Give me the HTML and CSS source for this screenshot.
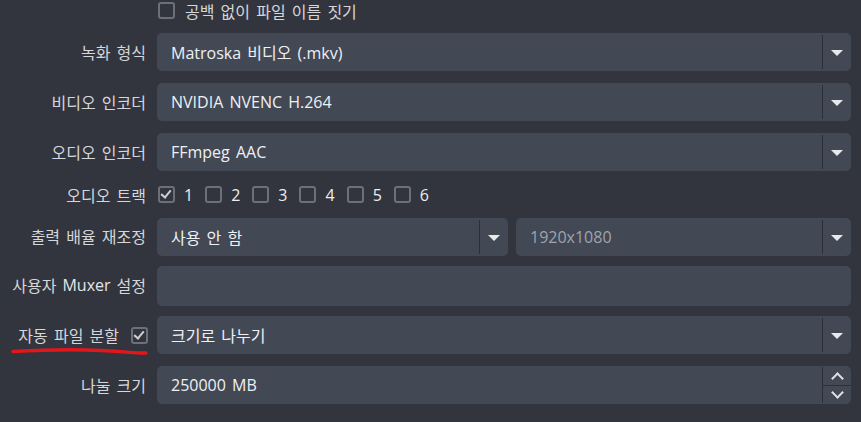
FILE: index.html
```html
<!DOCTYPE html>
<html lang="ko">
<head>
    <meta charset="UTF-8">
    <title>녹화 설정</title>
    <link rel="stylesheet" href="styles.css">
</head>
<body>
    <div class="form">
        <!-- top checkbox row -->
        <div class="label"></div>
        <label class="check-line">
            <span class="box"></span>
            <span>공백 없이 파일 이름 짓기</span>
        </label>

        <div class="label">녹화 형식</div>
        <div class="combo">
            <span class="combo-text">Matroska 비디오 (.mkv)</span>
            <span class="combo-arrow"><i class="tri"></i></span>
        </div>

        <div class="label">비디오 인코더</div>
        <div class="combo">
            <span class="combo-text">NVIDIA NVENC H.264</span>
            <span class="combo-arrow"><i class="tri"></i></span>
        </div>

        <div class="label">오디오 인코더</div>
        <div class="combo">
            <span class="combo-text">FFmpeg AAC</span>
            <span class="combo-arrow"><i class="tri"></i></span>
        </div>

        <div class="label">오디오 트랙</div>
        <div class="tracks">
            <label class="track"><span class="box checked"></span>1</label>
            <label class="track"><span class="box"></span>2</label>
            <label class="track"><span class="box"></span>3</label>
            <label class="track"><span class="box"></span>4</label>
            <label class="track"><span class="box"></span>5</label>
            <label class="track"><span class="box"></span>6</label>
        </div>

        <div class="label">출력 배율 재조정</div>
        <div class="split">
            <div class="combo">
                <span class="combo-text">사용 안 함</span>
                <span class="combo-arrow"><i class="tri"></i></span>
            </div>
            <div class="combo disabled">
                <span class="combo-text">1920x1080</span>
                <span class="combo-arrow"><i class="tri"></i></span>
            </div>
        </div>

        <div class="label">사용자<span class="latin">Muxer</span>설정</div>
        <div class="text-input"></div>

        <div class="label label-check">
            <span>자동 파일 분할</span>
            <span class="box checked"></span>
            <svg class="scribble" width="140" height="12" viewBox="0 0 140 12">
                <path d="M2 6.5 C 30 5, 60 4, 90 5.5 S 125 8.5, 135 8" />
            </svg>
        </div>
        <div class="combo">
            <span class="combo-text">크기로 나누기</span>
            <span class="combo-arrow"><i class="tri"></i></span>
        </div>

        <div class="label">나눌 크기</div>
        <div class="combo spin">
            <span class="combo-text">250000 MB</span>
            <span class="spin-buttons">
                <span class="spin-btn"><i class="chev up"></i></span>
                <span class="spin-btn"><i class="chev down"></i></span>
            </span>
        </div>
    </div>
</body>
</html>
```

FILE: styles.css
```css
body {
    margin: 0;
    background-color: #32353e;
    color: #d6d7da;
    font-family: "Open Sans", "Noto Sans CJK KR", sans-serif;
    font-size: 16px;
    word-spacing: 2px;
    height: 422px;
    overflow: hidden;
}

.form {
    display: grid;
    grid-template-columns: 148px 1fr;
    grid-template-rows: 21px 38px 38px 38px 23px 36px 38px 38px 37px;
    column-gap: 9px;
    row-gap: 12px;
    padding-right: 10px;
}

.label {
    display: flex;
    justify-content: flex-end;
    align-items: center;
    white-space: nowrap;
    padding-right: 2px;
}

.latin {
    color: #e4e6ea;
    margin: 0 6px;
}

.label-check {
    position: relative;
    gap: 12px;
    padding-right: 0;
}

.scribble {
    position: absolute;
    left: 11px;
    top: 29px;
}

.scribble path {
    fill: none;
    stroke: #e3161b;
    stroke-width: 3.4;
    stroke-linecap: round;
}

/* checkboxes */
.box {
    display: inline-block;
    box-sizing: border-box;
    width: 17px;
    height: 17px;
    border: 2px solid #6c707b;
    border-radius: 3px;
    position: relative;
    flex: none;
}

.box.checked::after {
    content: "";
    position: absolute;
    left: 3px;
    top: 0px;
    width: 4px;
    height: 8px;
    border: solid #cfd0d4;
    border-width: 0 2px 2px 0;
    transform: rotate(40deg);
}

.check-line {
    display: flex;
    align-items: center;
    gap: 10px;
    padding-left: 1px;
}

.tracks {
    display: flex;
    align-items: center;
    gap: 12px;
    padding-left: 1px;
    color: #eceef1;
}

.track {
    display: flex;
    align-items: center;
    gap: 9px;
}

/* combo boxes */
.combo,
.text-input {
    display: flex;
    align-items: center;
    background-color: #434855;
    border-radius: 5px;
    color: #eef0f3;
    height: 38px;
    align-self: start;
}

.text-input {
    height: 40px;
}

.combo-text {
    flex: 1;
    padding-left: 14px;
    white-space: nowrap;
}

.combo-arrow,
.spin-buttons {
    width: 28px;
    align-self: stretch;
    border-left: 1px solid #2c2f37;
    margin: 2px 0;
    display: flex;
    align-items: center;
    justify-content: center;
}

.tri {
    width: 0;
    height: 0;
    border-left: 6px solid transparent;
    border-right: 6px solid transparent;
    border-top: 6px solid #e8e9eb;
    margin-top: 1px;
}

.split {
    display: grid;
    grid-template-columns: 351px 1fr;
    gap: 8px;
    align-self: start;
}

.disabled .combo-text {
    color: #9ea4ad;
}

.spin-buttons {
    flex-direction: column;
    margin: 1px 0;
}

.spin-btn {
    flex: 1;
    width: 100%;
    display: flex;
    align-items: center;
    justify-content: center;
}

.spin-btn + .spin-btn {
    border-top: 1px solid #2c2f37;
}

.chev {
    width: 7px;
    height: 7px;
    border: solid #e0e1e4;
    border-width: 2px 2px 0 0;
}

.chev.up {
    transform: rotate(-45deg);
    margin-top: 5px;
}

.chev.down {
    transform: rotate(135deg);
    margin-top: -4px;
}
```
